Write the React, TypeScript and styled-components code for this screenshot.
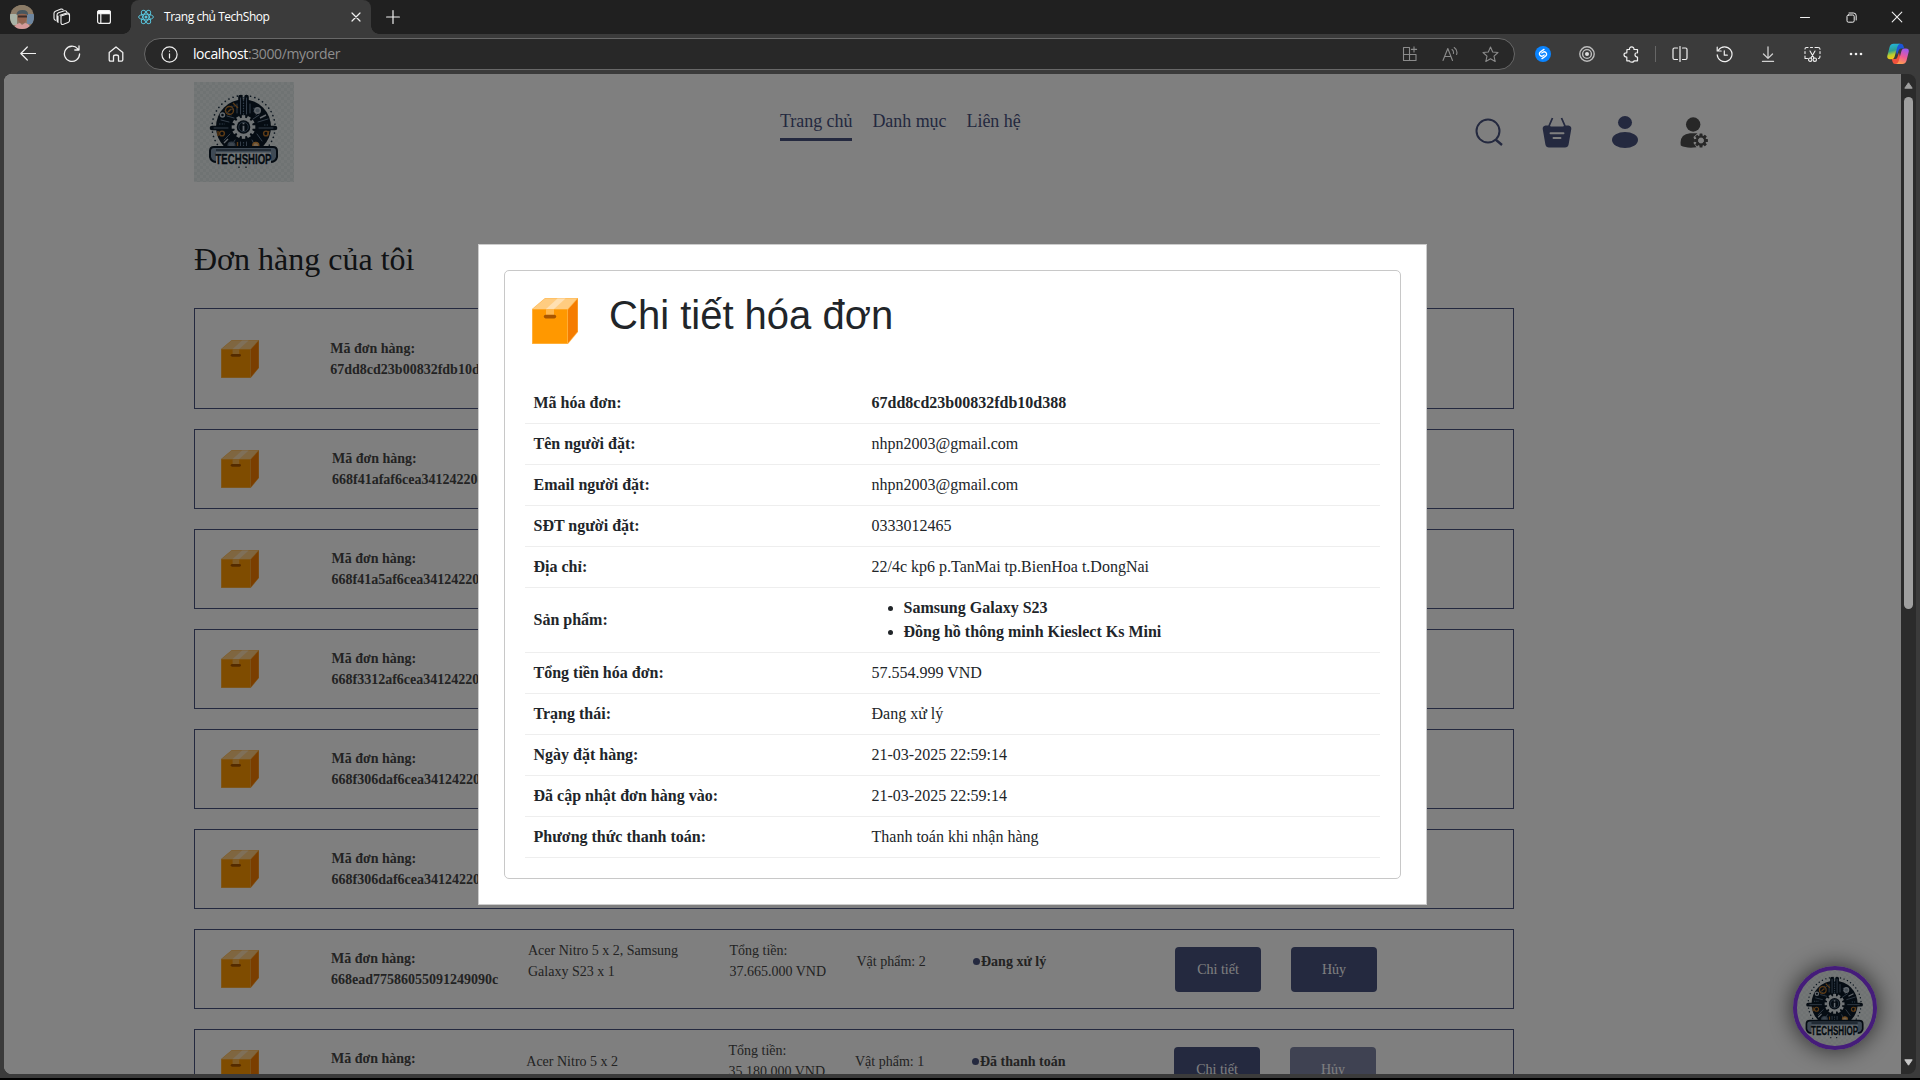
import React from 'react';
import styled, { createGlobalStyle } from 'styled-components';

const serif = '"Liberation Serif", "Times New Roman", serif';
const ui = '"Open Sans", "Noto Sans", sans-serif';
const navy = '#48527f';

const Global = createGlobalStyle`
  *, *::before, *::after { box-sizing: border-box; }
  body { margin: 0; background: #000; overflow: hidden; }
  svg { display: block; flex: none; }
`;

const Browser = styled.div`
  width: 1920px;
  height: 1080px;
  display: flex;
  flex-direction: column;
  background: #3b3b3b;
  border-bottom: 2px solid #000;
  overflow: hidden;
`;

/* ---------- browser chrome ---------- */

const TabStrip = styled.div`
  height: 34px;
  flex: none;
  display: flex;
  background: #202020;
`;

const Slot = styled.div<{ $w: number }>`
  width: ${p => p.$w}px;
  height: 100%;
  flex: none;
  display: flex;
  align-items: center;
  justify-content: center;
`;

const StripTools = styled.div`
  width: 131px;
  display: flex;
  padding-left: 1px;
`;

const Tab = styled.div`
  position: relative;
  width: 240px;
  height: 34px;
  display: flex;
  align-items: center;
  padding: 0 10px 0 7px;
  background: #3b3b3b;
  border-radius: 8px 8px 0 0;
  color: #fff;
  font: 12px/16px ${ui};
  &::before, &::after {
    content: '';
    position: absolute;
    bottom: 0;
    width: 8px;
    height: 8px;
  }
  &::before { left: -8px; background: radial-gradient(circle at 0 0, #202020 7.5px, #3b3b3b 8px); }
  &::after { right: -8px; background: radial-gradient(circle at 100% 0, #202020 7.5px, #3b3b3b 8px); }
`;

const TabTitle = styled.span`
  flex: 1;
  margin-left: 10px;
  letter-spacing: -0.46px;
  white-space: nowrap;
`;

const WindowButtons = styled.div`
  margin-left: auto;
  display: flex;
`;

const Toolbar = styled.div`
  height: 40px;
  flex: none;
  display: flex;
  align-items: center;
  padding-left: 6px;
`;

const AddressBar = styled.div`
  width: 1371px;
  height: 32px;
  margin: 0 6px 0 6px;
  display: flex;
  align-items: center;
  padding: 0 4px 0 16px;
  border: 1px solid #686868;
  border-radius: 16px;
  background: #282828;
`;

const Url = styled.span`
  flex: 1;
  margin-left: 15px;
  color: #8e8e8e;
  font: 14px/20px ${ui};
  letter-spacing: -0.38px;
  b { color: #fff; font-weight: 400; letter-spacing: -0.42px; }
`;

const Divider = styled.div`
  width: 1px;
  height: 16px;
  margin: 0 2px;
  background: #666;
`;

/* ---------- page ---------- */

const Viewport = styled.div`
  height: 1000px;
  margin: 0 4px;
  display: flex;
  border-radius: 8px;
  overflow: hidden;
`;

const Page = styled.div`
  position: relative;
  flex: 1;
  height: 1000px;
  padding: 8px 0 0 190px;
  background: #fff;
  overflow: hidden;
  font-family: ${serif};
`;

const ScrollTrack = styled.div`
  width: 15px;
  display: flex;
  flex-direction: column;
  align-items: center;
  padding: 8px 0;
  background: #2b2b2b;
`;

const ScrollThumb = styled.div`
  width: 9px;
  height: 512px;
  margin-top: 8px;
  margin-bottom: auto;
  border-radius: 5px;
  background: #9f9f9f;
`;

const Header = styled.header`
  display: grid;
  grid-template-columns: 586px 675px auto;
  justify-content: start;
  height: 100px;
`;

const Nav = styled.nav`
  display: flex;
  align-items: flex-start;
  gap: 20px;
  padding-top: 27px;
`;

const NavLink = styled.a<{ $active?: boolean }>`
  height: 32px;
  color: ${navy};
  font-size: 18px;
  line-height: 24px;
  letter-spacing: -0.05px;
  white-space: nowrap;
  border-bottom: 3px solid ${p => (p.$active ? navy : 'transparent')};
`;

const HeaderIcons = styled.div`
  display: flex;
  height: 100px;
`;

const PageTitle = styled.h2`
  margin: 58px 0 30px;
  height: 38px;
  color: #212529;
  font-size: 32px;
  font-weight: 400;
  line-height: 38px;
`;

const OrderList = styled.div`
  display: flex;
  flex-direction: column;
  gap: 20px;
  width: 1320px;
`;

const OrderRow = styled.article<{ $tall?: boolean; $columns: string }>`
  height: ${p => (p.$tall ? 101 : 80)}px;
  flex: none;
  display: grid;
  grid-template-columns: ${p => p.$columns};
  align-items: center;
  padding-left: 26px;
  border: 1px solid ${navy};
  color: #464646;
  font-size: 14px;
  line-height: 21px;
`;

const OrderId = styled.div`
  font-weight: 700;
  white-space: nowrap;
`;

const OrderText = styled.p`
  margin: 0 0 16px;
  max-width: 160px;
`;

const OrderStatus = styled(OrderText)`
  font-weight: 700;
  display: flex;
  align-items: center;
`;

const StatusDot = styled.i`
  width: 7px;
  height: 7px;
  margin-right: 1px;
  border-radius: 50%;
  background: ${navy};
`;

const OrderButton = styled.button`
  width: 86px;
  height: 45px;
  padding: 0;
  border: 0;
  border-radius: 4px;
  background: ${navy};
  color: #fff;
  font: 14px/21px ${serif};
  &:disabled { opacity: 0.7; }
`;

const ChatButton = styled.div`
  position: absolute;
  right: 24px;
  bottom: 24px;
  width: 84px;
  height: 84px;
  border-radius: 50%;
  box-shadow: 0 0 24px rgba(0, 0, 0, 0.7);
  svg { border-radius: 50%; }
  &::after {
    content: '';
    position: absolute;
    inset: 0;
    border: 4px solid #8a38f4;
    border-radius: 50%;
  }
`;

/* ---------- invoice dialog ---------- */

const Overlay = styled.div`
  position: absolute;
  inset: 0;
  display: flex;
  justify-content: center;
  align-items: flex-start;
  padding-top: 170px;
  background: rgba(0, 0, 0, 0.5);
`;

const Dialog = styled.section`
  width: 949px;
  height: 661px;
  padding: 25px;
  border: 1px solid #ccc;
  background: #fff;
`;

const InvoiceCard = styled.div`
  height: 609px;
  padding: 20px;
  border: 1px solid #c8c8c8;
  border-radius: 5px;
  color: #212529;
`;

const InvoiceHead = styled.div`
  height: 92px;
  display: flex;
  align-items: flex-start;
  padding-left: 7px;
  svg { margin-top: 7px; }
`;

const InvoiceTitle = styled.h1`
  margin: 0 0 0 31px;
  font: 400 40px/48px "Liberation Sans", Arial, sans-serif;
`;

const InvoiceRow = styled.div`
  display: grid;
  grid-template-columns: 338.5px 1fr;
  align-items: center;
  padding: 8px;
  border-bottom: 1px solid #eee;
  font-size: 16px;
  line-height: 24px;
`;

const Label = styled.div`
  padding-left: 0.5px;
  font-weight: 700;
`;

const Value = styled.div<{ $bold?: boolean }>`
  font-weight: ${p => (p.$bold ? 700 : 400)};
`;

const ProductList = styled.ul`
  margin: 0;
  padding-left: 32px;
  font-weight: 700;
`;

/* ---------- drawings ---------- */

const BoxIcon = ({ size }: { size: number }) => (
  <svg width={size} height={size} viewBox="0 0 46 46">
    <path d="M0 11L13 0H46V34L36 46H0Z" fill="#ffb74d" />
    <path d="M0.7 11L13.2 0.6H45L35.6 11Z" fill="#ffcc80" />
    <path d="M36 11.5L45.5 1V33.5L36 45Z" fill="#f57c00" />
    <path d="M0.8 11.5H35.3V45.2H0.8Z" fill="#ff9800" />
    <path d="M25.5 0.6H33.5L22 11H14Z" fill="#ffe0b2" />
    <path d="M14 11H22V17H14Z" fill="#ffb74d" />
    <rect x="11.8" y="16.8" width="12.4" height="3.6" rx="1.8" fill="#a95600" />
  </svg>
);

const ring = (n: number) => Array.from({ length: n }, (_, i) => (i * 360) / n);

const Logo = ({ size, id }: { size: number; id: string }) => (
  <svg width={size} height={size} viewBox="0 0 100 100">
    <defs>
      <pattern id={id} width="6" height="6" patternUnits="userSpaceOnUse">
        <rect width="6" height="6" fill="#e9eeee" />
        <path d="M0 0H3V3H0ZM3 3H6V6H3Z" fill="#dfe6e7" />
      </pattern>
    </defs>
    <rect width="100" height="100" fill={`url(#${id})`} />
    <path d="M49.5 76.5A31.5 31.5 0 1 1 49.6 76.5" fill="none" stroke="#172c3e" strokeWidth="1.6" strokeDasharray="0.1 4.3" strokeLinecap="round" />
    <circle cx="49.5" cy="45" r="27.5" fill="#0a1826" />
    <path d="M46.5 15V38M52.5 15V38M18 46H36M63 46H81" stroke="#0a1826" strokeWidth="4.6" strokeLinecap="round" />
    <path d="M46.5 16V32M52.5 16V32M20 46H34M65 46H79M46.5 60V70M52.5 60V70M37 33L31 29M62 33L66 27M35 40L27 38M64 40L74 37M36 52L30 58M63 52L68 59M41 58L36 66M58 58L61 64M43 22V31M56 22V31M40 36L33 34M59 37L65 33" fill="none" stroke="#7489a0" strokeWidth="0.9" strokeLinecap="round" />
    <path d="M49.5 15V34M49.5 60V71M38 28V24H42M60 30V25M70 43H74M25 42H31" fill="none" stroke="#5d7892" strokeWidth="1.2" strokeDasharray="1.5 1.2" />
    <g fill="none" strokeWidth="1.4">
      <circle cx="35.5" cy="28.5" r="4" stroke="#b9762c" />
      <path d="M34 30L37 27" stroke="#b9762c" />
      <circle cx="63.5" cy="28.5" r="2.8" stroke="#c4ced8" fill="#8fa0b0" />
      <circle cx="28.5" cy="33" r="2" stroke="#c4ced8" />
      <circle cx="61.8" cy="63.5" r="3" stroke="#dc9440" fill="#e8c79c" />
      <circle cx="37.5" cy="63.5" r="3.4" stroke="#5c7186" fill="#7b8c9e" />
      <circle cx="28" cy="51.5" r="2.4" stroke="#b9762c" />
      <circle cx="72" cy="51.5" r="2.4" stroke="#b9762c" />
      <path d="M39 21L44 26M43.5 60V70M24 49V54M75 49L73 54" stroke="#b9762c" />
      <path d="M66 36L72 33M30 61L34 57" stroke="#c4ced8" />
    </g>
    {ring(12).map(a => (
      <rect key={a} x="47.8" y="33.2" width="3.4" height="5" fill="#dfe6ea" transform={`rotate(${a} 49.5 45)`} />
    ))}
    <circle cx="49.5" cy="45" r="9.4" fill="#dfe6ea" />
    <circle cx="49.5" cy="45" r="6.8" fill="#0a1826" />
    <circle cx="49.5" cy="45" r="4.8" fill="none" stroke="#526b84" strokeWidth="0.9" />
    <path d="M49.5 43.8V49M49.5 40.8V42.2" stroke="#c4d0dc" strokeWidth="1.8" />
    <path d="M20 65H79Q83 65 83 69V75Q82 80 76 80H23Q17 80 16 75V69Q16 65 20 65Z" fill="#7e95ab" stroke="#0a1826" strokeWidth="2" />
    <path d="M22 68H77" stroke="#0a1826" strokeWidth="1.2" />
    <path d="M22 70.5H77V84H22Z" fill="#e4ebee" />
    <text x="21.5" y="82.3" textLength="56" lengthAdjust="spacingAndGlyphs" fontFamily='"Liberation Sans", Arial, sans-serif' fontWeight="700" fontSize="15" fill="#0a1826" stroke="#0a1826" strokeWidth="0.3">TECHSHIOP</text>
    <path d="M45 84.5V86M52 84.5V86" stroke="#0a1826" strokeWidth="1.2" />
  </svg>
);

const Avatar = () => (
  <svg width="24" height="24" viewBox="0 0 24 24">
    <defs><clipPath id="avatarClip"><circle cx="12" cy="12" r="12" /></clipPath></defs>
    <g clipPath="url(#avatarClip)">
      <rect width="24" height="24" fill="#8d7c68" />
      <path d="M0 0H24V6H0Z" fill="#8b7b66" />
      <path d="M0 9H7V20H0Z" fill="#a9b3a6" />
      <path d="M17 9H24V19H17Z" fill="#6d86a0" />
      <ellipse cx="12.2" cy="12.5" rx="4.6" ry="6.2" fill="#94644f" />
      <path d="M6.5 10Q6.5 5 12.5 5T18 10Q12 7.5 6.5 10Z" fill="#49575f" />
      <path d="M8 11.5H17" stroke="#3b2c2a" strokeWidth="1.8" />
      <path d="M3 24Q6 18 10 18L12 20L15 18Q19 18 21 24Z" fill="#d59a9a" />
    </g>
  </svg>
);

const Line = ({ size = 16, w = 1.1, color = '#f0f0f0', children }: { size?: number; w?: number; color?: string; children: React.ReactNode }) => (
  <svg width={size} height={size} viewBox={`0 0 ${size} ${size}`} fill="none" stroke={color} strokeWidth={w} strokeLinecap="round" strokeLinejoin="round">{children}</svg>
);

const ReactMark = () => (
  <svg width="16" height="16" viewBox="0 0 16 16" fill="none" stroke="#58c4dc" strokeWidth="1">
    {[0, 60, 120].map(a => <ellipse key={a} cx="8" cy="8" rx="7.4" ry="2.9" transform={`rotate(${a} 8 8)`} />)}
    <circle cx="8" cy="8" r="1.5" fill="#58c4dc" stroke="none" />
  </svg>
);

const Copilot = () => (
  <svg width="22" height="22" viewBox="0 0 22 22">
    <defs>
      <linearGradient id="cpA" x1="0" y1="0" x2="0.2" y2="1"><stop offset="0" stopColor="#1fb8ea" /><stop offset="0.5" stopColor="#2f9f8f" /><stop offset="0.75" stopColor="#b8cf30" /><stop offset="1" stopColor="#f5c518" /></linearGradient>
      <linearGradient id="cpB" x1="0.6" y1="0" x2="0.3" y2="1"><stop offset="0" stopColor="#9a58f0" /><stop offset="0.5" stopColor="#ee5a96" /><stop offset="1" stopColor="#ffa04d" /></linearGradient>
    </defs>
    <path d="M12 0.8H14Q15.8 0.8 16.4 2.8L17.2 5.5H14Q12.3 5.5 11.7 7.3L10 12L8 4Q9 0.8 12 0.8Z" fill="#1b55d8" />
    <path d="M10 21H8Q6.2 21 5.6 19L4.8 16H8Q9.7 16 10.3 14.5L12 9.5L14 18Q13 21 10 21Z" fill="#f0513c" />
    <path d="M6.5 0.8H13Q11 1.5 10.3 4L7.5 14Q6.8 16.2 4.5 16.2H3Q-0.5 16.2 0.4 12.5L2.6 4Q3.6 0.8 6.5 0.8Z" fill="url(#cpA)" />
    <path d="M15.5 21H9Q11 20.3 11.7 18L14.5 7.8Q15.2 5.5 17.5 5.5H19Q22.5 5.5 21.6 9.3L19.4 18Q18.4 21 15.5 21Z" fill="url(#cpB)" />
  </svg>
);

const SearchIcon = () => (
  <svg width="28" height="28" viewBox="0 0 28 28" fill="none" stroke={navy} strokeWidth="2">
    <circle cx="13" cy="13" r="11.5" /><path d="M20.5 21.5L27 27" strokeWidth="2.4" />
  </svg>
);

const BasketIcon = () => (
  <svg width="30" height="31" viewBox="0 0 30 31">
    <path d="M7 9L10.5 1M23 9L19.5 1" stroke={navy} strokeWidth="1.8" fill="none" />
    <path d="M3.5 8.5H8Q8 9.6 9.2 9.6H20.8Q22 9.6 22 8.5H26.5Q29.6 9 29.3 12L26.6 27.5Q26 30.5 23 30.5H7Q4 30.5 3.4 27.5L0.7 12Q0.4 9 3.5 8.5Z" fill={navy} />
    <path d="M8.5 16.2H21.5M11.5 21H18.5" stroke="#fff" strokeWidth="1.9" strokeLinecap="round" />
  </svg>
);

const UserIcon = () => (
  <svg width="26" height="32" viewBox="0 0 26 32" fill={navy}>
    <ellipse cx="13" cy="6.5" rx="7" ry="6.5" /><ellipse cx="13" cy="24" rx="13" ry="8" />
  </svg>
);

const UserGearIcon = () => (
  <svg width="28" height="31" viewBox="0 0 28 31">
    <ellipse cx="13.2" cy="7.5" rx="7.2" ry="7.2" fill="#4f4f4f" />
    <path d="M10 16.3H17.5L13.5 20L14.5 23.5L13.5 26L16.5 30.3Q6 31.5 0.8 28.5Q-1 17.5 10 16.3Z" fill="#4f4f4f" />
    {ring(8).map(a => <rect key={a} x="19.5" y="16.6" width="3" height="4" rx="0.5" fill="#4f4f4f" transform={`rotate(${a} 21 23.5)`} />)}
    <circle cx="21" cy="23.5" r="4.2" fill="none" stroke="#4f4f4f" strokeWidth="2" />
  </svg>
);

/* ---------- data ---------- */

type Order = {
  id: string;
  columns?: string;
  products?: string;
  total?: string;
  count?: number;
  status?: string;
  cancelled?: boolean;
};

const columns = '110px 197px 201.5px 127px 116.5px 202px 116px 1fr';

const orders: Order[] = [
  { id: '67dd8cd23b00832fdb10d', columns: '109.3px 1fr' },
  { id: '668f41afaf6cea341242208', columns: '111px 1fr' },
  { id: '668f41a5af6cea34124220', columns: '110.5px 1fr' },
  { id: '668f3312af6cea34124220', columns: '110.5px 1fr' },
  { id: '668f306daf6cea34124220', columns: '110.5px 1fr' },
  { id: '668f306daf6cea34124220', columns: '110.5px 1fr' },
  { id: '668ead77586055091249090c', products: 'Acer Nitro 5 x 2, Samsung Galaxy S23 x 1', total: '37.665.000 VND', count: 2, status: 'Đang xử lý' },
  { id: '', columns: '110px 195.3px 202.2px 126.5px 117px 202px 116px 1fr', products: 'Acer Nitro 5 x 2', total: '35.180.000 VND', count: 1, status: 'Đã thanh toán', cancelled: true },
];

const invoice: { label: string; value: string | string[]; bold?: boolean }[] = [
  { label: 'Mã hóa đơn:', value: '67dd8cd23b00832fdb10d388', bold: true },
  { label: 'Tên người đặt:', value: 'nhpn2003@gmail.com' },
  { label: 'Email người đặt:', value: 'nhpn2003@gmail.com' },
  { label: 'SĐT người đặt:', value: '0333012465' },
  { label: 'Địa chỉ:', value: '22/4c kp6 p.TanMai tp.BienHoa t.DongNai' },
  { label: 'Sản phẩm:', value: ['Samsung Galaxy S23', 'Đồng hồ thông minh Kieslect Ks Mini'] },
  { label: 'Tổng tiền hóa đơn:', value: '57.554.999 VND' },
  { label: 'Trạng thái:', value: 'Đang xử lý' },
  { label: 'Ngày đặt hàng:', value: '21-03-2025 22:59:14' },
  { label: 'Đã cập nhật đơn hàng vào:', value: '21-03-2025 22:59:14' },
  { label: 'Phương thức thanh toán:', value: 'Thanh toán khi nhận hàng' },
];

const Chrome = () => (
  <>
    <TabStrip>
      <StripTools>
        <Slot $w={41}><Avatar /></Slot>
        <Slot $w={39}>
          <Line size={18}>
            <path d="M7 7.2L13 5.2Q16.5 4.2 16.5 7V12.5Q16.5 14 15 14.6L10.5 16.3Q8 17 8 14.5V8.5" />
            <path d="M8 8L12.5 6.4Q16.5 5 16.5 8M5.2 14.3Q4 14 4 12.3V7Q4 5.5 5.5 4.8L11.5 2.8M2.5 12.3Q1 12 1 10.3V5.3Q1 3.8 2.5 3.2L8 1.1Q9.3 0.8 10 1.6M5 14.3V8M12.5 2.8Q13.8 3 14 4.5" />
          </Line>
        </Slot>
        <Slot $w={45}>
          <Line size={16} w={1.2}><rect x="1.6" y="1.6" width="12.8" height="12.8" rx="2" /><path d="M1.6 3.6Q1.6 1.6 3.6 1.6H12.4Q14.4 1.6 14.4 3.6V4.6H1.6Z" fill="#fff" /><path d="M4.8 5V14" /></Line>
        </Slot>
      </StripTools>
      <Tab>
        <ReactMark />
        <TabTitle>Trang chủ TechShop</TabTitle>
        <Line size={10} w={1.2}><path d="M1 1L9 9M9 1L1 9" /></Line>
      </Tab>
      <Slot $w={43}><Line size={14} w={1.2}><path d="M7 0.6V13.4M0.6 7H13.4" /></Line></Slot>
      <WindowButtons>
        <Slot $w={46}><Line size={10}><path d="M0.5 5.5H9.5" /></Line></Slot>
        <Slot $w={46}><Line size={11} w={1}><rect x="1" y="3" width="7.2" height="7.2" rx="1.4" /><path d="M3 1H7.5Q10.2 1 10.2 3.7V8" /></Line></Slot>
        <Slot $w={46}><Line size={12}><path d="M1.2 1.2L10.8 10.8M10.8 1.2L1.2 10.8" /></Line></Slot>
      </WindowButtons>
    </TabStrip>
    <Toolbar>
      <Slot $w={44}><Line size={16} w={1.2}><path d="M15.5 7.5H0.8M7.3 1L0.8 7.5L7.3 14" /></Line></Slot>
      <Slot $w={44}><Line size={18} w={1.3}><path d="M14.8 3.9A7.6 7.6 0 1 0 16.6 9M16 1V5H11.8" /></Line></Slot>
      <Slot $w={44}><Line size={16} w={1.3}><path d="M1.2 6.5L8 0.9L14.8 6.5V13.8Q14.8 15.2 13.5 15.2H10.5V10.5Q10.5 9 8 9T5.5 10.5V15.2H2.5Q1.2 15.2 1.2 13.8Z" /></Line></Slot>
      <AddressBar>
        <Line size={17} w={1.2}><circle cx="8.5" cy="8.5" r="7.6" /><path d="M8.5 7.8V12M8.5 5V5.2" /></Line>
        <Url><b>localhost</b>:3000/myorder</Url>
        <Slot $w={40}><Line size={16} color="#8b8b8b"><path d="M7 1.5H1.5V14.5H14V8.5H1.5M7.5 1.5V14.5M12 0.8V6M9.4 3.4H14.6" /></Line></Slot>
        <Slot $w={40}><Line size={16} color="#8b8b8b"><path d="M1 14.5L5.8 2.5L10.5 14.5M2.7 10.5H9M10 3.5Q12 5 11.4 7.5M12.2 1.5Q16 4 14.6 8.5" /></Line></Slot>
        <Slot $w={40}><Line size={17} color="#8b8b8b"><path d="M8.5 1L10.7 6L16 6.5L12 10.1L13.2 15.5L8.5 12.7L3.8 15.5L5 10.1L1 6.5L6.3 6Z" /></Line></Slot>
      </AddressBar>
      <Slot $w={44}>
        <svg width="16" height="16" viewBox="0 0 16 16"><circle cx="8" cy="8" r="8" fill="#0a84ff" /><path d="M9 3.4L5.6 5.8Q3.4 7.6 5.2 9.6Q6.6 10.8 8 9.8L9.2 9M7 12.6L10.4 10.2Q12.6 8.4 10.8 6.4Q9.4 5.2 8 6.2L6.8 7" fill="none" stroke="#fff" strokeWidth="1.35" strokeLinecap="round" /></svg>
      </Slot>
      <Slot $w={44}><Line size={16} w={1.4} color="#bdbdbd"><circle cx="8" cy="8" r="7.2" /><circle cx="8" cy="8" r="4.4" /><circle cx="8" cy="8" r="2" fill="#ddd" stroke="none" /></Line></Slot>
      <Slot $w={44}><Line size={17} w={1.2}><path d="M4 3.5H6.5Q6.3 0.9 8.7 0.9T11 3.5H14.5V6.8Q12 6.5 12 8.7T14.5 11V14.8H11Q11 16.2 8.8 16.2T6.5 14.8H3.8V11Q1 11 1 8.8T3.8 6.8Z" /></Line></Slot>
      <Divider />
      <Slot $w={44}><Line size={16} w={1.2}><path d="M5.5 2H2.5Q1 2 1 3.5V12Q1 13.5 2.5 13.5H5.5M10.5 2H13.5Q15 2 15 3.5V12Q15 13.5 13.5 13.5H10.5M8 0.5V15.5" /></Line></Slot>
      <Slot $w={44}><Line size={17} w={1.2}><path d="M2.5 4A7.4 7.4 0 1 1 1.2 8.8M1.2 1.2V5H5.2M8.3 4.8V9.2H11.3" /></Line></Slot>
      <Slot $w={44}><Line size={16} w={1.3} color="#d0d0d0"><path d="M8 0.8V12M3.5 8L8 12.4L12.5 8M2.5 15.4H13.5" /></Line></Slot>
      <Slot $w={44}><Line size={17} w={1.1}><path d="M1 12V10M1 7.5V5.5M1 3Q1 1.5 2.5 1.5H4M6.5 1.5H8.5M11 1.5H14Q16 1.5 16 3.2M16 5.5V7.5M16 10Q16 12.5 14.5 12.5M1 12.5H3.5" /><path d="M6 5L10 12M11 5L7 12" /><circle cx="6.2" cy="13.7" r="1.7" /><circle cx="10.8" cy="13.7" r="1.7" /></Line></Slot>
      <Slot $w={44}><svg width="16" height="4" viewBox="0 0 16 4" fill="#f0f0f0"><circle cx="3" cy="2" r="1.3" /><circle cx="8" cy="2" r="1.3" /><circle cx="13" cy="2" r="1.3" /></svg></Slot>
      <Slot $w={40}><Copilot /></Slot>
    </Toolbar>
  </>
);

const OrderItem = ({ order, tall }: { order: Order; tall: boolean }) => (
  <OrderRow $tall={tall} $columns={order.columns ?? columns}>
    <BoxIcon size={38} />
    <OrderId>Mã đơn hàng:<br />{order.id || '\u00a0'}</OrderId>
    {order.products && (
      <>
        <OrderText>{order.products}</OrderText>
        <OrderText>Tổng tiền:<br />{order.total}</OrderText>
        <OrderText>Vật phẩm: {order.count}</OrderText>
        <OrderStatus as="p"><StatusDot />{order.status}</OrderStatus>
        <OrderButton>Chi tiết</OrderButton>
        <OrderButton disabled={order.cancelled}>Hủy</OrderButton>
      </>
    )}
  </OrderRow>
);

export default function App() {
  return (
    <>
      <Global />
      <Browser>
        <Chrome />
        <Viewport>
          <Page>
            <Header>
              <Logo size={100} id="checkHeader" />
              <Nav>
                <NavLink $active>Trang chủ</NavLink>
                <NavLink>Danh mục</NavLink>
                <NavLink>Liên hệ</NavLink>
              </Nav>
              <HeaderIcons>
                <Slot $w={68}><SearchIcon /></Slot>
                <Slot $w={68}><BasketIcon /></Slot>
                <Slot $w={67}><UserIcon /></Slot>
                <Slot $w={71}><UserGearIcon /></Slot>
              </HeaderIcons>
            </Header>
            <PageTitle>Đơn hàng của tôi</PageTitle>
            <OrderList>
              {orders.map((o, i) => <OrderItem key={i} order={o} tall={i === 0} />)}
            </OrderList>
            <ChatButton><Logo size={84} id="checkChat" /></ChatButton>
            <Overlay>
              <Dialog>
                <InvoiceCard>
                  <InvoiceHead>
                    <BoxIcon size={46} />
                    <InvoiceTitle>Chi tiết hóa đơn</InvoiceTitle>
                  </InvoiceHead>
                  {invoice.map(r => (
                    <InvoiceRow key={r.label}>
                      <Label>{r.label}</Label>
                      {Array.isArray(r.value)
                        ? <ProductList>{r.value.map(v => <li key={v}>{v}</li>)}</ProductList>
                        : <Value $bold={r.bold}>{r.value}</Value>}
                    </InvoiceRow>
                  ))}
                </InvoiceCard>
              </Dialog>
            </Overlay>
          </Page>
          <ScrollTrack>
            <svg width="9" height="7" viewBox="0 0 9 7"><path d="M4.5 0.8L8.2 6.2H0.8Z" fill="#9f9f9f" stroke="#9f9f9f" strokeLinejoin="round" /></svg>
            <ScrollThumb />
            <svg width="9" height="7" viewBox="0 0 9 7"><path d="M4.5 6.2L8.2 0.8H0.8Z" fill="#c8c8c8" stroke="#c8c8c8" strokeLinejoin="round" /></svg>
          </ScrollTrack>
        </Viewport>
      </Browser>
    </>
  );
}
